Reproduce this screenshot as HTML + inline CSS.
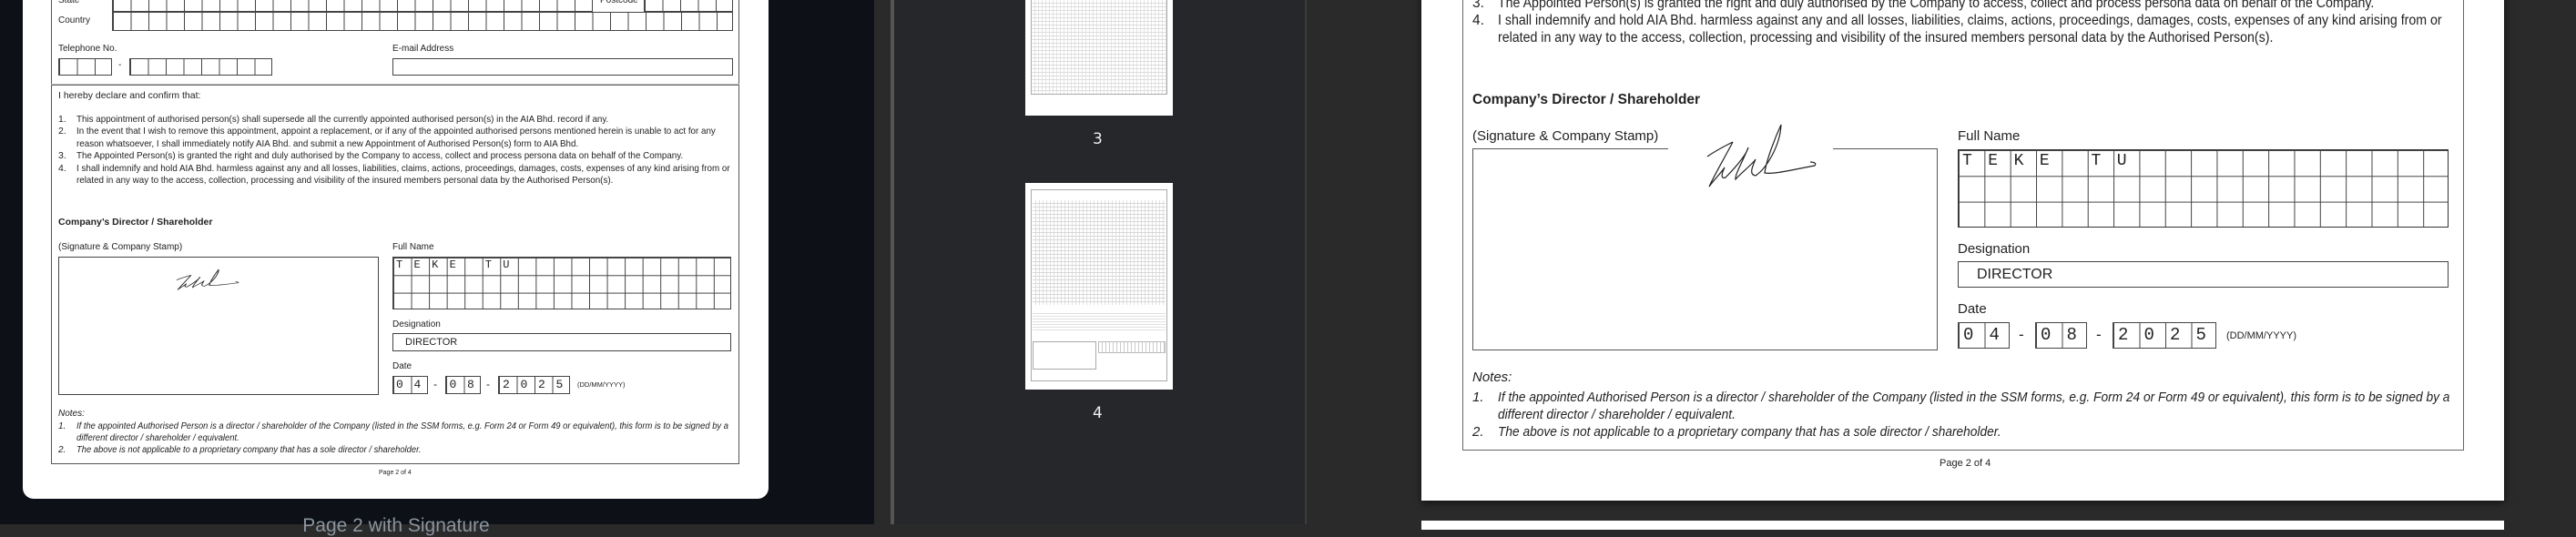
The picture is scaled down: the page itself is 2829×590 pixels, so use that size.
<!DOCTYPE html>
<html><head><meta charset="utf-8">
<style>
*{margin:0;padding:0;box-sizing:border-box}
body{width:2829px;height:576px;overflow:hidden;background:#2a2a2a;position:relative;font-family:"Liberation Sans",sans-serif;color:#222}
.a{position:absolute;white-space:nowrap}
.s{transform-origin:0 0}
.g{position:absolute;border:1px solid #444;background-image:linear-gradient(to right,#444 1px,transparent 1px)}
.bx{position:absolute;border:1px solid #444;background:#fff}
.mono{font-family:"Liberation Mono",monospace}
</style></head><body>
<!-- left area -->
<div class="a" style="left:0;top:0;width:960px;height:576px;background:#0d1117"></div>
<div class="a" style="left:25px;top:-20px;width:819px;height:568px;background:#fff;border-radius:12px"></div>
<div class="a" style="left:56px;top:-10px;width:756px;height:520px;border:1px solid #555"></div>
<div class="a" style="left:64px;top:-5px;font-size:10px">State</div>
<div class="g" style="left:123px;top:-8px;width:528px;height:21px;background-size:19.5px 100%"></div>
<div class="a" style="left:659px;top:-5px;font-size:10px">Postcode</div>
<div class="g" style="left:707px;top:-8px;width:98px;height:21px;background-size:19.5px 100%"></div>
<div class="a" style="left:64px;top:17px;font-size:10px">Country</div>
<div class="g" style="left:123px;top:13px;width:682px;height:21px;background-size:19.5px 100%"></div>
<div class="a" style="left:64px;top:48px;font-size:10px">Telephone No.</div>
<div class="g" style="left:64px;top:64px;width:59px;height:19px;background-size:19.5px 100%"></div>
<div class="a" style="left:130px;top:66px;font-size:10px">-</div>
<div class="g" style="left:142px;top:64px;width:157px;height:19px;background-size:19.5px 100%"></div>
<div class="a" style="left:431px;top:48px;font-size:10px">E-mail Address</div>
<div class="bx" style="left:431px;top:64px;width:374px;height:19px"></div>
<div class="a" style="left:56px;top:92px;width:756px;height:2px;border-top:1px solid #bbb;border-bottom:1px solid #666"></div>
<div class="a" style="left:64px;top:99px;font-size:10.5px">I hereby declare and confirm that:</div>
<div class="a" style="left:64px;top:125px;font-size:10.5px;line-height:13.4px">1.<br>2.<br><br>3.<br>4.</div>
<div class="a s" style="left:84px;top:125px;font-size:10.5px;line-height:13.4px;transform:scaleX(0.935)">This appointment of authorised person(s) shall supersede all the currently appointed authorised person(s) in the AIA Bhd. record if any.<br>In the event that I wish to remove this appointment, appoint a replacement, or if any of the appointed authorised persons mentioned herein is unable to act for any<br>reason whatsoever, I shall immediately notify AIA Bhd. and submit a new Appointment of Authorised Person(s) form to AIA Bhd.<br>The Appointed Person(s) is granted the right and duly authorised by the Company to access, collect and process persona data on behalf of the Company.<br>I shall indemnify and hold AIA Bhd. harmless against any and all losses, liabilities, claims, actions, proceedings, damages, costs, expenses of any kind arising from or<br>related in any way to the access, collection, processing and visibility of the insured members personal data by the Authorised Person(s).</div>
<div class="a" style="left:64px;top:238px;font-size:10.5px;font-weight:bold">Company’s Director / Shareholder</div>
<div class="a" style="left:64px;top:266px;font-size:10px">(Signature &amp; Company Stamp)</div>
<div class="a" style="left:431px;top:266px;font-size:10px">Full Name</div>
<div class="bx" style="left:64px;top:282px;width:352px;height:152px"></div>
<svg class="a" style="left:0;top:0" width="960" height="576"><g transform="translate(194,296) scale(0.57,0.33) translate(-1875,-137)" fill="none" stroke="#333" stroke-width="2"><path d="M1875,172 C1885,165 1895,160 1903,156 M1903,156 C1893,175 1883,192 1877,205 C1882,198 1890,190 1894,184 C1891,190 1889,197 1895,195 C1905,185 1918,170 1920,162 C1915,175 1905,192 1906,197 C1912,190 1925,180 1928,175 C1925,182 1920,192 1928,193 C1940,185 1955,160 1956,137 C1950,150 1940,175 1938,190 C1948,192 1970,186 1993,182 C1995,180 1993,178 1988,178"/></g></svg>
<div class="g" style="left:431px;top:282px;width:372px;height:58px;background-image:linear-gradient(to right,#444 1px,transparent 1px),linear-gradient(to bottom,#444 1px,transparent 1px);background-size:19.55px 100%,100% 19.3px"></div>
<div class="a mono" style="left:435px;top:284px;font-size:12px;letter-spacing:12.35px">TEKE TU</div>
<div class="a" style="left:431px;top:351px;font-size:10px">Designation</div>
<div class="bx" style="left:431px;top:366px;width:372px;height:20px"></div>
<div class="a" style="left:445px;top:370px;font-size:11px">DIRECTOR</div>
<div class="a" style="left:431px;top:397px;font-size:10px">Date</div>
<div class="g" style="left:431px;top:413px;width:39px;height:20px;background-size:19.5px 100%"></div>
<div class="g" style="left:489px;top:413px;width:39px;height:20px;background-size:19.5px 100%"></div>
<div class="g" style="left:547px;top:413px;width:79px;height:20px;background-size:19.5px 100%"></div>
<div class="a mono" style="left:435px;top:415px;font-size:13px;letter-spacing:11.7px">04 08 2025</div>
<div class="a" style="left:476px;top:415px;font-size:12px">-</div>
<div class="a" style="left:534px;top:415px;font-size:12px">-</div>
<div class="a" style="left:634px;top:418px;font-size:7.5px">(DD/MM/YYYY)</div>
<div class="a" style="left:64px;top:449px;font-size:10px;font-style:italic">Notes:</div>
<div class="a" style="left:64px;top:462px;font-size:10px;font-style:italic;line-height:13px">1.<br><br>2.</div>
<div class="a s" style="left:84px;top:462px;font-size:10px;font-style:italic;line-height:13px;transform:scaleX(0.94)">If the appointed Authorised Person is a director / shareholder of the Company (listed in the SSM forms, e.g. Form 24 or Form 49 or equivalent), this form is to be signed by a<br>different director / shareholder / equivalent.<br>The above is not applicable to a proprietary company that has a sole director / shareholder.</div>
<div class="a" style="left:416px;top:516px;font-size:7px">Page 2 of 4</div>
<div class="a" style="left:330px;top:566px;width:210px;text-align:center;font-size:21px;color:#8b949e">Page 2 with Signature</div>

<!-- middle panel -->
<div class="a" style="left:978px;top:0;width:4px;height:576px;background:#555"></div>
<div class="a" style="left:982px;top:0;width:451px;height:576px;background:#26272a"></div>
<div class="a" style="left:1433px;top:0;width:2px;height:576px;background:#3c3c3c"></div>
<div class="a" style="left:1126px;top:0;width:162px;height:127px;background:#fff"></div>
<div class="a" style="left:1132px;top:-5px;width:150px;height:109px;border:1px solid #aaa;background-image:repeating-linear-gradient(to bottom,transparent 0 3px,#ddd 3px 4px),repeating-linear-gradient(to right,transparent 0 3px,#e4e4e4 3px 4px)"></div>
<div class="a" style="left:1200px;top:143px;font-size:17px;color:#eee;font-family:'DejaVu Sans',sans-serif">3</div>
<div class="a" style="left:1126px;top:201px;width:162px;height:227px;background:#fff"></div>
<div class="a" style="left:1132px;top:208px;width:150px;height:211px;border:1px solid #aaa"></div>
<div class="a" style="left:1134px;top:220px;width:146px;height:115px;background-image:repeating-linear-gradient(to bottom,transparent 0 3px,#d8d8d8 3px 4px),repeating-linear-gradient(to right,transparent 0 3px,#e0e0e0 3px 4px)"></div>
<div class="a" style="left:1134px;top:342px;width:146px;height:22px;background-image:repeating-linear-gradient(to bottom,transparent 0 2px,#e0e0e0 2px 3px)"></div>
<div class="a" style="left:1134px;top:375px;width:70px;height:31px;border:1px solid #aaa"></div>
<div class="a" style="left:1206px;top:375px;width:74px;height:13px;background-image:repeating-linear-gradient(to right,transparent 0 3px,#ccc 3px 4px);border:1px solid #bbb"></div>
<div class="a" style="left:1200px;top:444px;font-size:17px;color:#eee;font-family:'DejaVu Sans',sans-serif">4</div>

<!-- right page -->
<div class="a" style="left:1561px;top:-10px;width:1189px;height:560px;background:#fff;box-shadow:0 2px 8px rgba(0,0,0,.6)"></div>
<div class="a" style="left:1561px;top:572px;width:1189px;height:10px;background:#fff"></div>
<div class="a" style="left:1606px;top:-10px;width:1100px;height:505px;border:1px solid #666"></div>
<div class="a" style="left:1617px;top:-6px;font-size:15.5px;line-height:19px">3.<br>4.</div>
<div class="a s" style="left:1645px;top:-6px;font-size:15.5px;line-height:19px;transform:scaleX(0.915)">The Appointed Person(s) is granted the right and duly authorised by the Company to access, collect and process persona data on behalf of the Company.<br>I shall indemnify and hold AIA Bhd. harmless against any and all losses, liabilities, claims, actions, proceedings, damages, costs, expenses of any kind arising from or<br>related in any way to the access, collection, processing and visibility of the insured members personal data by the Authorised Person(s).</div>
<div class="a" style="left:1617px;top:101px;font-size:15.5px;font-weight:bold">Company’s Director / Shareholder</div>
<div class="a" style="left:1617px;top:141px;font-size:15px">(Signature &amp; Company Stamp)</div>
<div class="a" style="left:2150px;top:141px;font-size:15px">Full Name</div>
<div class="a" style="left:1617px;top:163px;width:511px;height:222px;border:1px solid #555;background:#fff"></div>
<div class="a" style="left:1832px;top:160px;width:181px;height:6px;background:#fff"></div>
<svg class="a" style="left:1560px;top:100px" width="560" height="150"><g transform="translate(-1560,-100)" fill="none" stroke="#222" stroke-width="1.2"><path d="M1875,172 C1885,165 1895,160 1903,156 M1903,156 C1893,175 1883,192 1877,205 C1882,198 1890,190 1894,184 C1891,190 1889,197 1895,195 C1905,185 1918,170 1920,162 C1915,175 1905,192 1906,197 C1912,190 1925,180 1928,175 C1925,182 1920,192 1928,193 C1940,185 1955,160 1956,137 C1950,150 1940,175 1938,190 C1948,192 1970,186 1993,182 C1995,180 1993,178 1988,178"/></g></svg>
<div class="g" style="left:2150px;top:164px;width:539px;height:86px;border-color:#333;background-image:linear-gradient(to right,#444 1px,transparent 1px),linear-gradient(to bottom,#444 1px,transparent 1px);background-size:28.35px 100%,100% 28.3px"></div>
<div class="a mono" style="left:2155px;top:167px;font-size:18px;letter-spacing:17.5px">TEKE TU</div>
<div class="a" style="left:2150px;top:265px;font-size:15px">Designation</div>
<div class="bx" style="left:2150px;top:287px;width:539px;height:29px"></div>
<div class="a" style="left:2171px;top:293px;font-size:16px">DIRECTOR</div>
<div class="a" style="left:2150px;top:331px;font-size:15px">Date</div>
<div class="g" style="left:2150px;top:354px;width:57px;height:29px;background-size:28.5px 100%"></div>
<div class="g" style="left:2235px;top:354px;width:57px;height:29px;background-size:28.5px 100%"></div>
<div class="g" style="left:2320px;top:354px;width:114px;height:29px;background-size:28.5px 100%"></div>
<div class="a mono" style="left:2156px;top:357px;font-size:19px;letter-spacing:17.1px">04</div>
<div class="a mono" style="left:2241px;top:357px;font-size:19px;letter-spacing:17.1px">08</div>
<div class="a mono" style="left:2326px;top:357px;font-size:19px;letter-spacing:17.1px">2025</div>
<div class="a" style="left:2217px;top:358px;font-size:17px">-</div>
<div class="a" style="left:2302px;top:358px;font-size:17px">-</div>
<div class="a" style="left:2445px;top:363px;font-size:11px">(DD/MM/YYYY)</div>
<div class="a" style="left:1617px;top:406px;font-size:15px;font-style:italic">Notes:</div>
<div class="a" style="left:1617px;top:427px;font-size:15px;font-style:italic;line-height:19px">1.<br><br>2.</div>
<div class="a s" style="left:1645px;top:427px;font-size:15px;font-style:italic;line-height:19px;transform:scaleX(0.915)">If the appointed Authorised Person is a director / shareholder of the Company (listed in the SSM forms, e.g. Form 24 or Form 49 or equivalent), this form is to be signed by a<br>different director / shareholder / equivalent.<br>The above is not applicable to a proprietary company that has a sole director / shareholder.</div>
<div class="a" style="left:2130px;top:503px;font-size:11px">Page 2 of 4</div>
</body></html>
